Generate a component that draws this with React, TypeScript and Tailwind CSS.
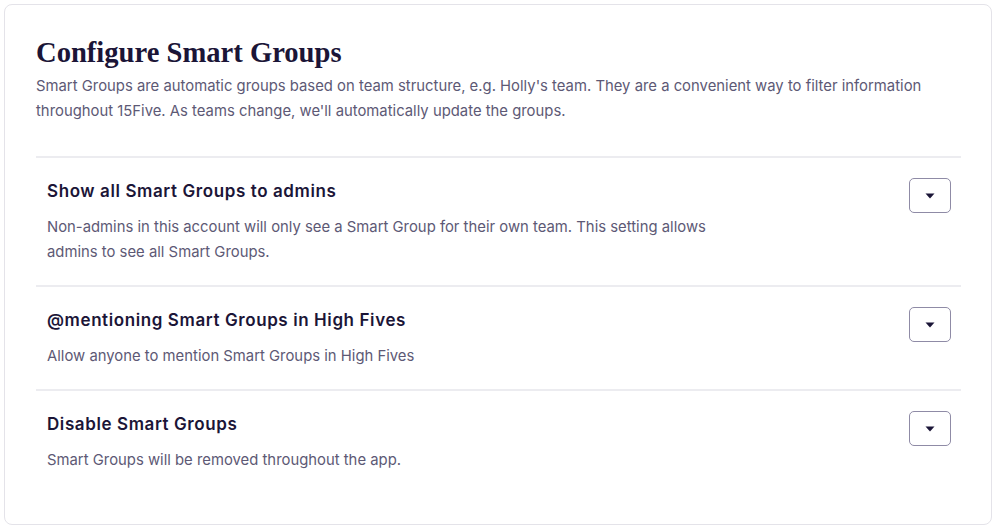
import React from 'react';

const sections = [
  {
    title: 'Show all Smart Groups to admins',
    description:
      'Non-admins in this account will only see a Smart Group for their own team. This setting allows admins to see all Smart Groups.',
  },
  {
    title: '@mentioning Smart Groups in High Fives',
    description: 'Allow anyone to mention Smart Groups in High Fives',
  },
  {
    title: 'Disable Smart Groups',
    description: 'Smart Groups will be removed throughout the app.',
  },
];

function CaretButton() {
  return (
    <button className="mt-[-1px] flex h-[35px] w-[42px] shrink-0 items-center justify-center rounded-[5px] border border-[#8f8ba6] bg-white">
      <svg width="10" height="6" viewBox="0 0 10 6">
        <path d="M0.5 0.5 L9.5 0.5 L5 5.5 Z" fill="#1b1537" />
      </svg>
    </button>
  );
}

export default function App() {
  return (
    <div className="min-h-screen bg-white p-[4px] font-['Inter',sans-serif]">
      <div className="rounded-[8px] border border-[#e4e3e9] pl-[31px] pr-[30px] pt-[30px] pb-[31px]">
        <h1 className="font-['Liberation_Serif',serif] text-[28.6px] font-bold leading-[36px] text-[#1b1537]">
          Configure Smart Groups
        </h1>
        <p className="mt-[3px] text-[14.85px] leading-[25px] text-[#5d5975]">
          Smart Groups are automatic groups based on team structure, e.g. Holly's team. They are a convenient way to filter information throughout 15Five. As teams change, we'll automatically update the groups.
        </p>
        <div className="mt-[32px]">
          {sections.map((s) => (
            <div
              key={s.title}
              className="flex items-start justify-between border-t-2 border-[#ececf0] pl-[11px] pr-[10px] pt-[21px] pb-[20px]"
            >
              <div className="max-w-[672px]">
                <h2 className="text-[17px] font-semibold leading-[24px] tracking-[0.035em] text-[#1b1537]">
                  {s.title}
                </h2>
                <p className="mt-[12px] text-[14.85px] leading-[25px] text-[#5d5975]">{s.description}</p>
              </div>
              <CaretButton />
            </div>
          ))}
        </div>
      </div>
    </div>
  );
}
